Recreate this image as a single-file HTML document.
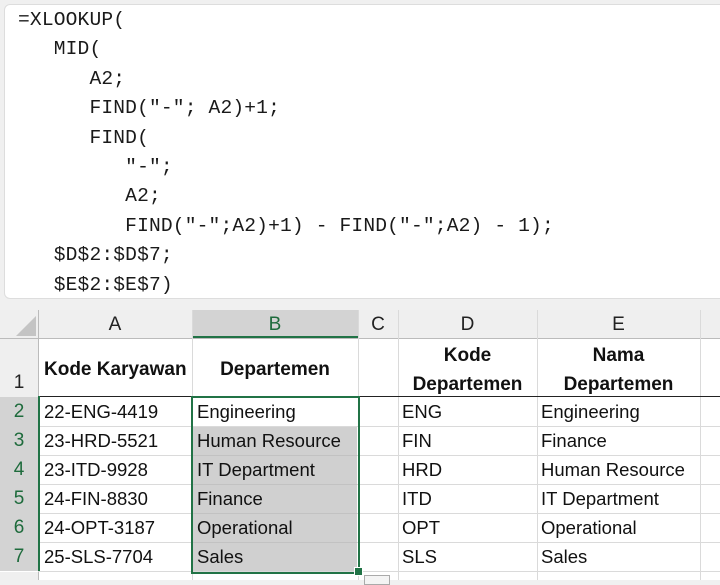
<!DOCTYPE html>
<html><head><style>
body{margin:0;width:720px;height:580px;overflow:hidden;background:#f0f0f0;position:relative;font-family:"Liberation Sans",sans-serif}
.fb{position:absolute;left:4px;top:4px;width:730px;height:293px;background:#fff;border:1px solid #ddd;border-radius:6px}
.f{position:absolute;left:18px;font-family:"Liberation Mono",monospace;font-size:19.6px;letter-spacing:0.15px;color:#1a1a1a;white-space:pre;line-height:29.4px}
.g{position:absolute;background:#fff}
.c{position:absolute;font-size:18.5px;color:#111;white-space:nowrap;height:29px;line-height:30px}
.h{position:absolute;background:#efefef;text-align:center;font-size:19px;color:#222;line-height:30px}
.vl{position:absolute;width:1px;background:#dadada}
.hl{position:absolute;height:1px;background:#dadada}
b{font-weight:bold;font-size:19px}
</style></head><body>
<div class="fb"></div>
<div class="f" style="top:6px">=XLOOKUP(
   MID(
      A2;
      FIND("-"; A2)+1;
      FIND(
         "-";
         A2;
         FIND("-";A2)+1) - FIND("-";A2) - 1);
   $D$2:$D$7;
   $E$2:$E$7)</div>

<div class="g" style="left:0;top:310px;width:720px;height:270px"></div>
<div class="h" style="left:0;top:310px;width:720px;height:28px;border-bottom:1px solid #bbb"></div>
<div style="position:absolute;left:16px;top:316px;width:0;height:0;border-left:20px solid transparent;border-bottom:20px solid #c4c4c4"></div>
<div class="h" style="left:38px;top:310px;width:154px;height:28px">A</div>
<div class="h" style="left:192px;top:310px;width:166px;height:26px;background:#d3d3d3;color:#1e6b3c;border-bottom:2px solid #217346">B</div>
<div class="h" style="left:358px;top:310px;width:40px;height:28px">C</div>
<div class="h" style="left:398px;top:310px;width:139px;height:28px">D</div>
<div class="h" style="left:537px;top:310px;width:163px;height:28px">E</div>
<div class="h" style="left:0;top:339px;width:38px;height:58px;line-height:88px;text-align:center">1</div>
<div class="h" style="left:0;top:397px;width:38px;height:174px;background:#d3d3d3"></div>
<div class="h" style="left:0;top:397px;width:38px;height:29px;background:transparent;color:#1e6b3c">2</div>
<div class="h" style="left:0;top:426px;width:38px;height:29px;background:transparent;color:#1e6b3c">3</div>
<div class="h" style="left:0;top:455px;width:38px;height:29px;background:transparent;color:#1e6b3c">4</div>
<div class="h" style="left:0;top:484px;width:38px;height:29px;background:transparent;color:#1e6b3c">5</div>
<div class="h" style="left:0;top:513px;width:38px;height:29px;background:transparent;color:#1e6b3c">6</div>
<div class="h" style="left:0;top:542px;width:38px;height:29px;background:transparent;color:#1e6b3c">7</div>
<div class="h" style="left:0;top:572px;width:38px;height:8px"></div>
<div class="vl" style="left:38px;top:310px;height:270px;background:#bbb"></div>
<div class="vl" style="left:192px;top:310px;height:270px"></div>
<div class="vl" style="left:358px;top:310px;height:270px"></div>
<div class="vl" style="left:398px;top:310px;height:270px"></div>
<div class="vl" style="left:537px;top:310px;height:270px"></div>
<div class="vl" style="left:700px;top:310px;height:270px"></div>
<div class="hl" style="left:38px;top:426px;width:682px"></div>
<div class="hl" style="left:38px;top:455px;width:682px"></div>
<div class="hl" style="left:38px;top:484px;width:682px"></div>
<div class="hl" style="left:38px;top:513px;width:682px"></div>
<div class="hl" style="left:38px;top:542px;width:682px"></div>
<div class="hl" style="left:38px;top:571px;width:682px"></div>
<div class="hl" style="left:38px;top:396px;width:682px;background:#222"></div>
<div style="position:absolute;left:193px;top:427px;width:164px;height:144px;background:#d0d0d0"></div>
<div class="hl" style="left:193px;top:455px;width:164px;background:#c2c2c2"></div>
<div class="hl" style="left:193px;top:484px;width:164px;background:#c2c2c2"></div>
<div class="hl" style="left:193px;top:513px;width:164px;background:#c2c2c2"></div>
<div class="hl" style="left:193px;top:542px;width:164px;background:#c2c2c2"></div>
<div style="position:absolute;left:191px;top:396px;width:165px;height:174px;border:2px solid #217346"></div>
<div style="position:absolute;left:354px;top:567px;width:7px;height:7px;background:#217346;border:1px solid #fff"></div>
<div style="position:absolute;left:38px;top:396px;width:1px;height:175px;border-left:2px solid #217346"></div>
<div style="position:absolute;left:364px;top:575px;width:24px;height:8px;border:1px solid #aaa;background:#f4f4f4"></div>
<div class="c" style="left:44px;top:354px"><b>Kode Karyawan</b></div>
<div class="c" style="left:192px;top:354px;width:166px;text-align:center"><b>Departemen</b></div>
<div class="c" style="left:398px;top:340px;width:139px;text-align:center"><b>Kode</b></div>
<div class="c" style="left:398px;top:369px;width:139px;text-align:center"><b>Departemen</b></div>
<div class="c" style="left:537px;top:340px;width:163px;text-align:center"><b>Nama</b></div>
<div class="c" style="left:537px;top:369px;width:163px;text-align:center"><b>Departemen</b></div>
<div class="c" style="left:44px;top:397px">22-ENG-4419</div>
<div class="c" style="left:44px;top:426px">23-HRD-5521</div>
<div class="c" style="left:44px;top:455px">23-ITD-9928</div>
<div class="c" style="left:44px;top:484px">24-FIN-8830</div>
<div class="c" style="left:44px;top:513px">24-OPT-3187</div>
<div class="c" style="left:44px;top:542px">25-SLS-7704</div>
<div class="c" style="left:197px;top:397px">Engineering</div>
<div class="c" style="left:197px;top:426px">Human Resource</div>
<div class="c" style="left:197px;top:455px">IT Department</div>
<div class="c" style="left:197px;top:484px">Finance</div>
<div class="c" style="left:197px;top:513px">Operational</div>
<div class="c" style="left:197px;top:542px">Sales</div>
<div class="c" style="left:402px;top:397px">ENG</div>
<div class="c" style="left:402px;top:426px">FIN</div>
<div class="c" style="left:402px;top:455px">HRD</div>
<div class="c" style="left:402px;top:484px">ITD</div>
<div class="c" style="left:402px;top:513px">OPT</div>
<div class="c" style="left:402px;top:542px">SLS</div>
<div class="c" style="left:541px;top:397px">Engineering</div>
<div class="c" style="left:541px;top:426px">Finance</div>
<div class="c" style="left:541px;top:455px">Human Resource</div>
<div class="c" style="left:541px;top:484px">IT Department</div>
<div class="c" style="left:541px;top:513px">Operational</div>
<div class="c" style="left:541px;top:542px">Sales</div>
</body></html>
